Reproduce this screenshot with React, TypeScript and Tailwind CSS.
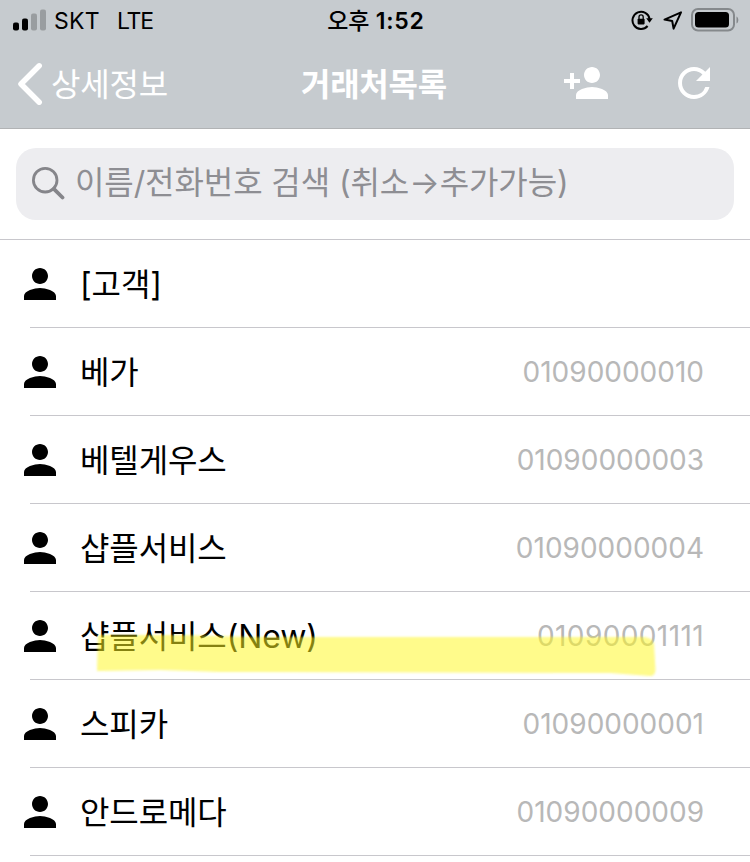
import { MdPerson, MdPersonAdd, MdRefresh } from 'react-icons/md';

type Customer = { name: string; phone?: string; marked?: boolean };

const customers: Customer[] = [
  { name: '[고객]' },
  { name: '베가', phone: '01090000010' },
  { name: '베텔게우스', phone: '01090000003' },
  { name: '샵플서비스', phone: '01090000004' },
  { name: '샵플서비스(New)', phone: '01090001111', marked: true },
  { name: '스피카', phone: '01090000001' },
  { name: '안드로메다', phone: '01090000009' },
];

function StatusBar() {
  return (
    <div className="grid h-10 grid-cols-[1fr_auto_1fr] items-center pl-[13px] pr-[11px] text-black">
      <div className="flex items-center">
        <svg width="34" height="22" viewBox="0 0 34 22">
          <rect x="0" y="13.5" width="6" height="8" rx="2" />
          <rect x="9" y="9.5" width="6" height="12" rx="2" />
          <rect x="18" y="4.5" width="6" height="17" rx="2" fill="#999da0" />
          <rect x="27" y="0.5" width="6" height="21" rx="2" fill="#999da0" />
        </svg>
        <span className="ml-[7px] pt-0.5 text-[23px] leading-none tracking-[0.3px]">SKT</span>
        <span className="ml-[17px] pt-0.5 text-[23px] leading-none tracking-[-1.2px]">LTE</span>
      </div>
      <div className="text-[23px] font-semibold leading-none tracking-[0.8px]">
        <span className="font-['Noto_Sans_CJK_KR',sans-serif] font-medium tracking-[-0.3px]">오후</span> 1:52
      </div>
      <div className="flex items-center justify-end">
        <svg width="22" height="22" viewBox="0 0 22 22" fill="none">
          <path d="M18.6 10A8.6 8.6 0 1 0 16.6 17" stroke="#000" strokeWidth="2" />
          <path d="M15.2 9.2h6.6l-3.3 4.6z" fill="#000" />
          <rect x="6.6" y="9.8" width="7" height="5.6" rx="0.8" fill="#000" />
          <path d="M8 10V8a2.1 2.1 0 0 1 4.2 0v2" stroke="#000" strokeWidth="1.3" />
        </svg>
        <svg className="ml-[10px]" width="20" height="20" viewBox="0 0 20 20" fill="none">
          <path d="M1.5 9.6 18 2.4l-7.4 16.2-1.4-7.6z" stroke="#000" strokeWidth="2" strokeLinejoin="round" />
        </svg>
        <svg className="ml-[7px]" width="49" height="24" viewBox="0 0 49 24">
          <rect x="2" y="1" width="42" height="21.5" rx="6" fill="none" stroke="#85898c" strokeWidth="2" />
          <rect x="5" y="4" width="34" height="15.5" rx="3.5" />
          <path d="M46.5 8.5c2.4 1 2.4 6 0 7z" fill="#85898c" />
        </svg>
      </div>
    </div>
  );
}

function NavBar() {
  return (
    <div className="grid h-[88px] grid-cols-[1fr_auto_1fr] items-center pb-0.5 pl-[17px] pr-8 font-['Noto_Sans_CJK_KR',sans-serif] text-white">
      <button className="flex items-center text-[32px] leading-none tracking-[-0.2px]">
        <svg width="26" height="44" viewBox="0 0 26 44" fill="none" stroke="currentColor" strokeWidth="5.5" strokeLinecap="round" strokeLinejoin="round">
          <path d="M22.2 4.8 4 23l18.2 18.2" />
        </svg>
        <span className="ml-2 pb-[3px]">상세정보</span>
      </button>
      <h1 className="ml-[13px] pb-0.5 text-[32px] font-bold leading-none tracking-[-0.2px]">거래처목록</h1>
      <div className="flex justify-end gap-15">
        <MdPersonAdd size={48} />
        <MdRefresh size={48} />
      </div>
    </div>
  );
}

function SearchBar() {
  return (
    <div className="border-b border-[#c8c7cc] px-4 pb-[19px] pt-[19px]">
      <div className="flex h-[72px] items-center rounded-[20px] bg-[#ededf0] pl-4 text-[#8e8e93]">
        <svg className="mb-0.5" width="33" height="33" viewBox="0 0 33 33" fill="none" stroke="#85858a">
          <circle cx="13.2" cy="13.2" r="11.8" strokeWidth="2.8" />
          <path d="m21.8 21.8 8.7 8.7" strokeWidth="3.8" strokeLinecap="round" />
        </svg>
        <span className="ml-2.5 whitespace-pre pb-0.5 font-[Inter,'Noto_Sans_CJK_KR',sans-serif] text-[32px] leading-none tracking-[-0.1px]">
          이름/전화번호 검색 (취소→추가가능)
        </span>
      </div>
    </div>
  );
}

// Felt-pen stroke under the highlighted customer
function Marker() {
  return (
    <svg className="pointer-events-none absolute left-[90px] top-[38px]" width="574" height="52" viewBox="0 0 574 52">
      <defs>
        <filter id="soft" x="-2%" y="-10%" width="104%" height="120%">
          <feGaussianBlur stdDeviation="1.1" />
        </filter>
      </defs>
      <path
        filter="url(#soft)"
        fill="#fff81e"
        fillOpacity="0.52"
        d="M8 5 90 5 160 7 554 7Q563 8 564 14L565.5 40Q565 46 560 46L520 43 130 42 70 40 7 41Z"
      />
    </svg>
  );
}

function CustomerRow({ name, phone, marked }: Customer) {
  return (
    <li className="relative flex h-[88px] pl-[30px]">
      <div className="flex flex-1 items-center justify-between border-b border-[#c8c7cc] pr-[46px]">
        <div className="-ml-3.5 flex items-center">
          <MdPerson size={48} />
          <span className="ml-4 pt-[3px] font-[Inter,'Noto_Sans_CJK_KR',sans-serif] text-[32px] leading-none tracking-[-0.1px]">
            {name}
          </span>
        </div>
        {phone && (
          <span className={`pt-px text-[28px] leading-none text-[#b8b8b8] ${marked ? 'tracking-[0.4px]' : ''}`}>
            {phone}
          </span>
        )}
      </div>
      {marked && <Marker />}
    </li>
  );
}

export default function App() {
  return (
    <div className="h-[862px] w-[750px] overflow-hidden bg-white font-['Inter',sans-serif] text-black">
      <header className="border-b border-[#b1b3b5] bg-[#c6cbcf]">
        <StatusBar />
        <NavBar />
      </header>
      <SearchBar />
      <ul>
        {customers.map((customer) => (
          <CustomerRow key={customer.name} {...customer} />
        ))}
      </ul>
    </div>
  );
}
